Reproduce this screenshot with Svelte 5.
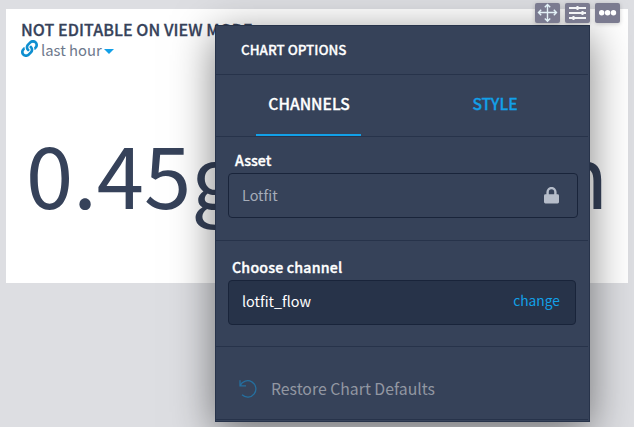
<script>
  const title = 'NOT EDITABLE ON VIEW MODE';
</script>

<main class="board">
  <section class="card">
    <h1>{title}</h1>
    <div class="range">
      <svg class="link" width="18" height="18" viewBox="0 0 512 512"><path fill="#0f8fd0" d="M326.612 185.391c59.747 59.809 58.927 155.698.36 214.59-.11.12-.24.25-.36.37l-67.2 67.2c-59.27 59.27-155.699 59.262-214.96 0-59.27-59.26-59.27-155.7 0-214.96l37.106-37.106c9.84-9.84 26.786-3.3 27.294 10.606.648 17.722 3.826 35.527 9.69 52.721 1.986 5.822.567 12.262-3.783 16.612l-13.087 13.087c-28.026 28.026-28.905 73.66-1.155 101.96 28.024 28.579 74.086 28.749 102.325.51l67.2-67.19c28.191-28.191 28.073-73.757 0-101.83-3.701-3.694-7.429-6.564-10.341-8.569a16.037 16.037 0 0 1-6.947-12.606c-.396-10.567 3.348-21.456 11.698-29.806l21.054-21.055c5.521-5.521 14.182-6.199 20.584-1.731a152.482 152.482 0 0 1 20.522 17.197zM467.547 44.449c-59.261-59.262-155.69-59.27-214.96 0l-67.2 67.2c-.12.12-.25.25-.36.37-58.566 58.892-59.387 154.781.36 214.59a152.454 152.454 0 0 0 20.521 17.196c6.402 4.468 15.064 3.789 20.584-1.731l21.054-21.055c8.35-8.35 12.094-19.239 11.698-29.806a16.037 16.037 0 0 0-6.947-12.606c-2.912-2.005-6.64-4.875-10.341-8.569-28.073-28.073-28.191-73.639 0-101.83l67.2-67.19c28.239-28.239 74.3-28.069 102.325.51 27.75 28.3 26.872 73.934-1.155 101.96l-13.087 13.087c-4.35 4.35-5.769 10.79-3.783 16.612 5.864 17.194 9.042 34.999 9.69 52.721.509 13.906 17.454 20.446 27.294 10.606l37.106-37.106c59.271-59.259 59.271-155.699.001-214.959z"/></svg>
      <span>last hour</span><i class="caret"></i>
    </div>
    <div class="value">0.45g<span>allon/min</span></div>
  </section>

  <aside class="panel">
    <header>CHART OPTIONS</header>
    <nav>
      <div class="tab active"><span>CHANNELS</span></div>
      <div class="tab"><span>STYLE</span></div>
    </nav>
    <div class="group asset">
      <label for="asset">Asset</label>
      <div class="field" id="asset">
        <span>Lotfit</span>
        <svg width="15" height="17" viewBox="0 0 15 17"><path fill="none" stroke="#b6bdca" stroke-width="2.4" d="M3.6 8V5a3.9 3.9 0 0 1 7.8 0v3"/><rect y="7.3" width="15" height="9.2" rx="1.4" fill="#b6bdca"/></svg>
      </div>
    </div>
    <div class="group channel">
      <label for="channel">Choose channel</label>
      <div class="field" id="channel">
        <span>lotfit_flow</span>
        <b>change</b>
      </div>
    </div>
    <footer>
      <svg width="20" height="20" viewBox="0 0 20 20" fill="none" stroke="#256f9f" stroke-width="1.3"><path d="M2 1.2v5.6h6M2.2 6.5A8.2 8.2 0 1 1 4 15.8"/></svg>
      <span>Restore Chart Defaults</span>
    </footer>
  </aside>

  <div class="tools">
    <button aria-label="Move"><svg width="25" height="20" viewBox="0 0 25 20" fill="none" stroke="#e3f2f8" stroke-width="1.4"><path d="M12.500 1.500v17M3.500 9.500h18M9.800 4.300l2.700-2.800 2.700 2.800M9.800 15.500l2.700 2.800 2.700-2.800M6.200 6.800L3.500 9.500l2.700 2.700M18.800 6.800l2.700 2.700-2.700 2.700"/></svg></button>
    <button aria-label="Settings"><svg width="25" height="20" viewBox="0 0 25 20" fill="none" stroke="#f2f3f6"><path stroke-width="2" d="M4 5h17M4 10h17M4 15h17"/><path stroke-width="2" d="M12.500 3v4M17.500 8v4M8.500 13v4"/></svg></button>
    <button aria-label="More"><svg width="25" height="20" viewBox="0 0 25 20" fill="#fff"><circle cx="6.700" cy="9.800" r="2.700"/><circle cx="12.600" cy="9.800" r="2.700"/><circle cx="18.500" cy="9.800" r="2.700"/></svg></button>
  </div>
</main>

<style>
  .board {
    position: relative;
    box-sizing: border-box;
    width: 634px;
    height: 427px;
    padding: 9px 6px;
    overflow: hidden;
    background: #dddee2;
    font-family: "Noto Sans CJK SC", "Noto Sans", sans-serif;
    color: #36425a;
    white-space: nowrap;
  }
  .card {
    box-sizing: border-box;
    width: 622px;
    height: 274px;
    padding: 9px 15px;
    overflow: hidden;
    background: #fff;
  }
  h1 {
    margin: 0;
    font-size: 16px;
    line-height: 22px;
    font-weight: 500;
    letter-spacing: 0.08px;
    -webkit-text-stroke: 0.3px currentColor;
  }
  .range {
    display: flex;
    align-items: center;
    height: 20px;
    font-size: 14.8px;
    line-height: 20px;
    color: #6d788c;
  }
  .link { width: 17px; height: 17px; margin: -3px 3px 0 0; }
  .caret {
    margin: 2px 0 0 2px;
    border: 5px solid transparent;
    border-top-color: #12a0e8;
    border-bottom: 0;
  }
  .value {
    padding: 52px 0 0 5px;
    font-size: 85px;
    line-height: 120px;
  }
  .value span { letter-spacing: -2.2px; }
  .panel {
    position: absolute;
    left: 215px;
    top: 25px;
    box-sizing: border-box;
    width: 375px;
    height: 397px;
    padding-right: 1px;
    border: 1px solid #27334a;
    background: #364259;
    box-shadow: 0 10px 40px rgba(0, 0, 0, 0.5);
    color: #fff;
  }
  header {
    height: 48px;
    padding-left: 25px;
    border-bottom: 1px solid #27334a;
    font-size: 13.4px;
    line-height: 47px;
    font-weight: 500;
    -webkit-text-stroke: 0.3px currentColor;
  }
  nav {
    display: flex;
    height: 61px;
    padding: 0 0 0 40px;
    gap: 81px;
    border-bottom: 1px solid #27334a;
  }
  .tab {
    box-sizing: border-box;
    width: 105px;
    height: 61px;
    padding-left: 1px;
    text-align: center;
    font-size: 15.6px;
    line-height: 57px;
    font-weight: 500;
    -webkit-text-stroke: 0.3px currentColor;
    color: #12a0e8;
  }
  .active { border-bottom: 2px solid #12a0e8; color: #fff; }
  .group {
    box-sizing: border-box;
    border-bottom: 1px solid #27334a;
  }
  .asset { height: 104px; padding: 14px 10px 0 12px; }
  .channel { height: 106px; padding: 17px 12px 0 12px; }
  label {
    display: block;
    height: 22px;
    padding-left: 7px;
    font-size: 14.2px;
    line-height: 19px;
    font-weight: 500;
    letter-spacing: 0.2px;
    -webkit-text-stroke: 0.35px currentColor;
  }
  .asset label { letter-spacing: 0; }
  .channel label { padding-left: 4px; }
  .field {
    box-sizing: border-box;
    display: flex;
    align-items: center;
    justify-content: space-between;
    height: 45px;
    padding: 0 18px 0 13px;
    border: 1px solid #19243a;
    border-radius: 4px;
    font-size: 14.4px;
    line-height: 41px;
    color: #a6adb9;
  }
  .field span { margin-top: -2px; }
  .channel .field { background: #273349; padding-right: 15px; color: #fff; }
  .channel .field span { margin-top: -5px; }
  .field b { margin-top: -4px; font-size: 13.8px; font-weight: 400; color: #12a0e8; }
  footer {
    box-sizing: border-box;
    display: flex;
    align-items: center;
    height: 73px;
    padding: 11px 0 0 22px;
    gap: 13px;
    border-bottom: 1px solid #27334a;
    font-size: 15.8px;
    line-height: 24px;
    color: #9297a2;
  }
  .tools {
    position: absolute;
    left: 535px;
    top: 3px;
    display: flex;
    gap: 5px;
  }
  button {
    display: block;
    width: 25px;
    height: 20px;
    padding: 0;
    border: 0;
    border-radius: 2px;
    background: #7b7b90;
    box-shadow: 0 1px 4px rgba(0, 0, 0, 0.2);
  }
  button svg { display: block; }
</style>
